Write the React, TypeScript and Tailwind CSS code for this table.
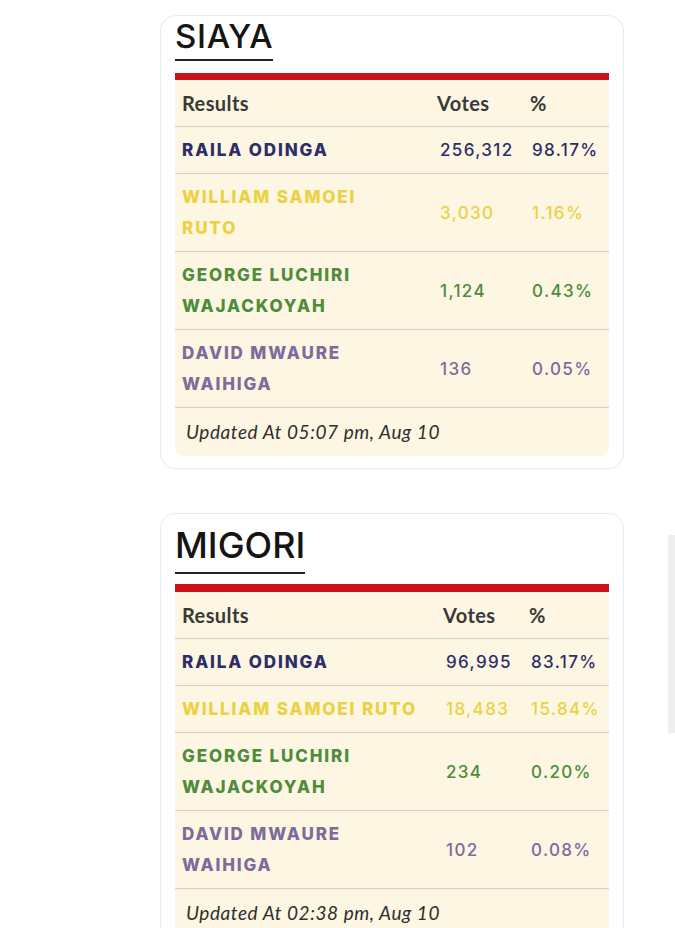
import React from 'react';

type Row = {
	name: string;
	votes: string;
	pct: string;
	color: string;
};

type County = {
	title: string;
	updated: string;
	rows: Row[];
};

const SIAYA: County = {
	title: 'SIAYA',
	updated: 'Updated At 05:07 pm, Aug 10',
	rows: [
		{ name: 'RAILA ODINGA', votes: '256,312', pct: '98.17%', color: 'text-[#2d2e68]' },
		{ name: 'WILLIAM SAMOEI RUTO', votes: '3,030', pct: '1.16%', color: 'text-[#ebd142]' },
		{ name: 'GEORGE LUCHIRI WAJACKOYAH', votes: '1,124', pct: '0.43%', color: 'text-[#4e8c3c]' },
		{ name: 'DAVID MWAURE WAIHIGA', votes: '136', pct: '0.05%', color: 'text-[#7d6b9b]' },
	],
};

const MIGORI: County = {
	title: 'MIGORI',
	updated: 'Updated At 02:38 pm, Aug 10',
	rows: [
		{ name: 'RAILA ODINGA', votes: '96,995', pct: '83.17%', color: 'text-[#2d2e68]' },
		{ name: 'WILLIAM SAMOEI RUTO', votes: '18,483', pct: '15.84%', color: 'text-[#ebd142]' },
		{ name: 'GEORGE LUCHIRI WAJACKOYAH', votes: '234', pct: '0.20%', color: 'text-[#4e8c3c]' },
		{ name: 'DAVID MWAURE WAIHIGA', votes: '102', pct: '0.08%', color: 'text-[#7d6b9b]' },
	],
};

const TITLE_FONT = "font-['Inter',sans-serif]";
const BODY_FONT = "font-['Lato',sans-serif]";
const NAME_FONT = "font-['Inter',sans-serif]";

const ResultsCard = ({ county, big }: { county: County; big?: boolean }) => {
	const cols = big ? 'grid-cols-[264px_85px_1fr]' : 'grid-cols-[258px_92px_1fr]';

	return (
		<div className="w-[464px] shrink-0 rounded-[16px] border border-[#ececec] bg-white px-[14px] pb-[12px] shadow-[0_1px_3px_rgba(0,0,0,0.03)]">
			<div className={big ? 'pt-[10px]' : 'pt-[1px]'}>
				<h2
					className={`inline-block border-b-2 border-[#222] text-[#151515] font-medium ${TITLE_FONT} ${
						big
							? 'text-[36px] leading-[42px] pb-[6px]'
							: 'text-[33px] leading-[38px] tracking-[0.02em] pb-[4px]'
					}`}
				>
					{county.title}
				</h2>
			</div>

			<div className={`bg-[#c9101b] ${big ? 'mt-[10px] h-[8px]' : 'mt-[12px] h-[7px]'}`} />

			<div className="rounded-b-[8px] bg-[#fdf6e2]">
				<div
					className={`grid ${cols} h-[47px] items-center border-b border-[#d8d1c1] text-[20px] font-bold tracking-[0.02em] text-[#393939] ${BODY_FONT}`}
				>
					<div className="px-[7px]">Results</div>
					<div className="pl-[4px]">Votes</div>
					<div className="pl-[5px]">%</div>
				</div>

				{county.rows.map((row) => (
					<div
						key={row.name}
						className={`grid ${cols} items-center border-b border-[#d8d1c1] pt-[8px] pb-[7px] ${row.color} ${NAME_FONT}`}
					>
						<div
							className={`pl-[7px] text-[17px] leading-[31px] font-extrabold tracking-[0.11em] ${
								big ? 'pr-[7px]' : 'pr-[20px]'
							}`}
						>
							{row.name}
						</div>
						<div className="pl-[7px] text-[17px] leading-[31px] font-medium tracking-[0.08em]">{row.votes}</div>
						<div className="pl-[7px] text-[17px] leading-[31px] font-medium tracking-[0.08em]">{row.pct}</div>
					</div>
				))}

				<div
					className={`flex h-[48px] items-center px-[11px] text-[19px] italic tracking-[0.03em] text-[#2f2f2f] ${BODY_FONT}`}
				>
					{county.updated}
				</div>
			</div>
		</div>
	);
};

export default function App() {
	return (
		<div className="min-h-screen w-full overflow-hidden bg-white pt-[15px]">
			<div className="pl-[160px]">
				<ResultsCard county={SIAYA} />
			</div>

			<div className="mt-[44px] flex items-start pl-[160px]">
				<ResultsCard county={MIGORI} big />
				<div className="ml-[44px] mt-[22px] h-[198px] w-[12px] shrink-0 bg-[#efefef]" />
			</div>
		</div>
	);
}
